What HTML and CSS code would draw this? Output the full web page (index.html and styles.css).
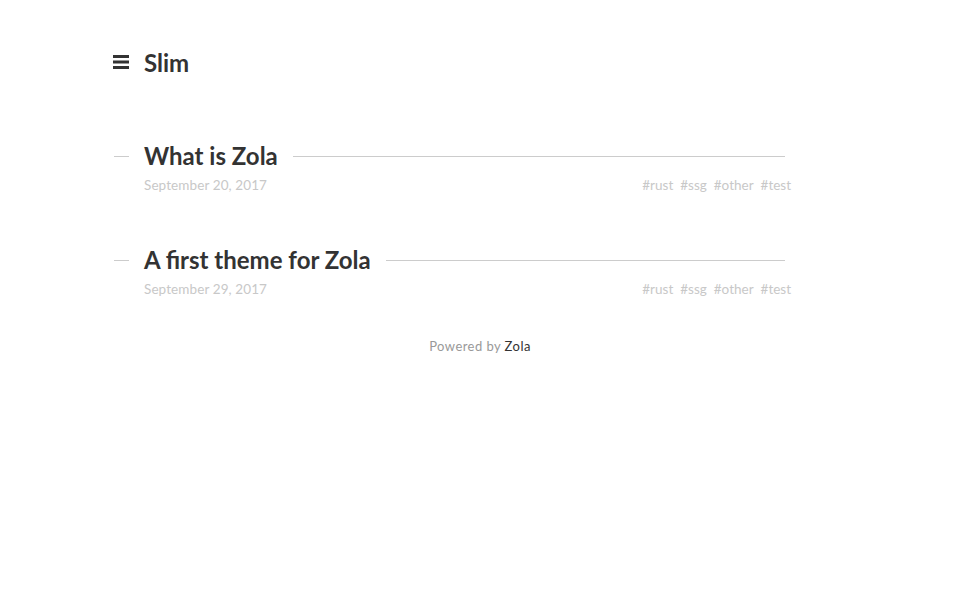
FILE: index.html
```html
<!DOCTYPE html>
<html>
<head>
<meta charset="utf-8">
<link rel="stylesheet" href="styles.css">
</head>
<body>
<div class="page">
  <header class="header">
    <span class="menu">
      <svg width="16" height="16" viewBox="0 0 16 16"><rect x="0" y="1" width="16" height="3" fill="#333"/><rect x="0" y="6.5" width="16" height="3" fill="#333"/><rect x="0" y="12" width="16" height="3" fill="#333"/></svg>
    </span>
    <a class="site-title" href="#">Slim</a>
  </header>
  <main class="posts">
    <article class="post">
      <h2 class="post-title"><a href="#">What is Zola</a></h2>
      <div class="meta">
        <span class="date">September 20, 2017</span>
        <span class="tags"><a href="#">#rust</a><a href="#">#ssg</a><a href="#">#other</a><a href="#">#test</a></span>
      </div>
    </article>
    <article class="post">
      <h2 class="post-title"><a href="#">A first theme for Zola</a></h2>
      <div class="meta">
        <span class="date">September 29, 2017</span>
        <span class="tags"><a href="#">#rust</a><a href="#">#ssg</a><a href="#">#other</a><a href="#">#test</a></span>
      </div>
    </article>
  </main>
  <footer class="footer">Powered by <a href="#">Zola</a></footer>
</div>
</body>
</html>
```
FILE: styles.css
```css
html, body { margin: 0; padding: 0; background: #fff; }
body { font-family: "Lato", "Open Sans", sans-serif; color: #333; }
a { text-decoration: none; color: inherit; }
.page { width: 677px; margin-left: 114px; padding-top: 46px; }
.header { display: flex; align-items: center; height: 32px; }
.menu { width: 30px; display: flex; align-items: center; margin-left: -1px; }
.menu svg { display: block; }
.site-title { font-size: 24px; font-weight: 700; color: #333; margin-left: 1px; }
.posts { margin-top: 63px; }
.post { margin-bottom: 52px; }
.post-title { display: flex; align-items: center; margin: 0; font-size: 24px; font-weight: 700; line-height: 30px; gap: 15px; color: #333; }
.post-title::before { content: ""; width: 15px; height: 1px; background: #ccc; }
.post-title::after { content: ""; flex: 1; height: 1px; background: #ccc; margin-right: 6px; }
.meta { display: flex; justify-content: space-between; margin-left: 30px; margin-top: 6px; font-size: 13.5px; color: #c8c8c8; line-height: 16px; }
.date { letter-spacing: 0.1px; }
.tags a { margin-left: 7px; }
.footer { text-align: center; margin-left: -114px; width: 960px; font-size: 13px; color: #999; letter-spacing: 0.45px; margin-top: -11px; }
.footer a { color: #333; }
```
